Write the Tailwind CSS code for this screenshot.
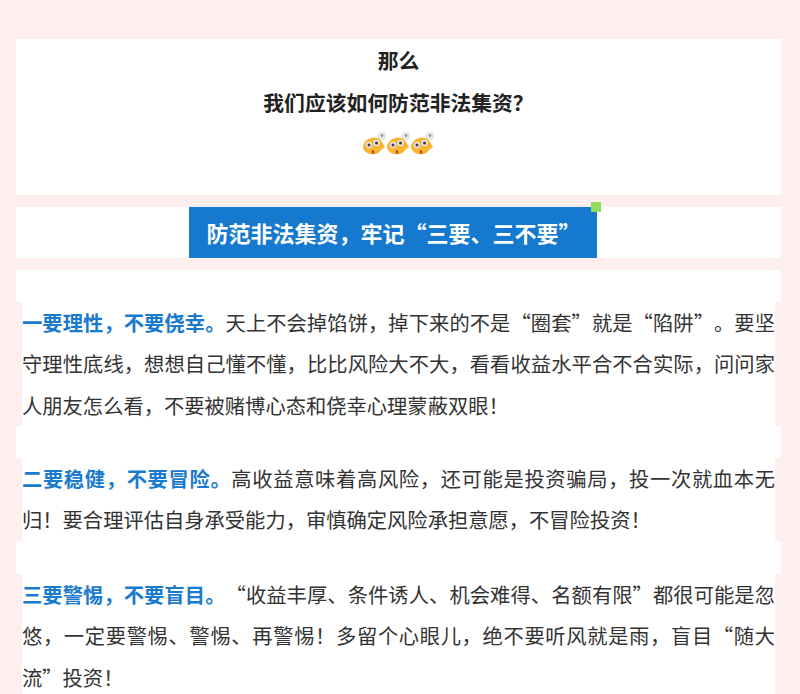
<!DOCTYPE html>
<html lang="zh-CN">
<head>
  <meta charset="UTF-8" />
  <title>防范非法集资</title>
  <script src="https://cdn.jsdelivr.net/npm/@tailwindcss/browser@4"></script>
</head>
<body class="bg-[#ffeeee] h-[694px] overflow-hidden font-['Noto_Sans_CJK_SC','Liberation_Sans',sans-serif] text-[#333] [text-spacing-trim:space-all]">
  <main class="pt-[39px] px-4 w-[797px]">

    <!-- 标题 -->
    <section class="bg-white h-[156px] flex flex-col items-center pt-[1px] text-[20.8px] font-bold text-[#222]">
      <p class="h-[41px] leading-[41px]">那么</p>
      <p class="h-[42px] leading-[42px]">我们应该如何防范非法集资？</p>
      <div class="flex mt-[8px] ml-[-1px]">
        <svg class="w-6 h-7" viewBox="0 0 24 28"><circle cx="20" cy="5" r="4" fill="#e4e4e4"/><circle cx="20" cy="4.500" r="1.200" fill="#888"/><path d="M1 17a10.500 10.500 0 0 1 19-6l3 5-3.500 2.500a10.500 10.500 0 0 1-18.500-1.500z" fill="#f9b430"/><circle cx="7" cy="14" r="3.200" fill="#e6e6e6"/><circle cx="14.500" cy="12" r="3.200" fill="#e6e6e6"/><circle cx="7" cy="14" r="1.500" fill="#3c3c4a"/><circle cx="14.500" cy="12" r="1.500" fill="#3c3c4a"/><ellipse cx="11" cy="21" rx="1.400" ry="1.900" fill="#b5521b"/></svg>
        <svg class="w-6 h-7" viewBox="0 0 24 28"><circle cx="20" cy="5" r="4" fill="#e4e4e4"/><circle cx="20" cy="4.500" r="1.200" fill="#888"/><path d="M1 17a10.500 10.500 0 0 1 19-6l3 5-3.500 2.500a10.500 10.500 0 0 1-18.500-1.500z" fill="#f9b430"/><circle cx="7" cy="14" r="3.200" fill="#e6e6e6"/><circle cx="14.500" cy="12" r="3.200" fill="#e6e6e6"/><circle cx="7" cy="14" r="1.500" fill="#3c3c4a"/><circle cx="14.500" cy="12" r="1.500" fill="#3c3c4a"/><ellipse cx="11" cy="21" rx="1.400" ry="1.900" fill="#b5521b"/></svg>
        <svg class="w-6 h-7" viewBox="0 0 24 28"><circle cx="20" cy="5" r="4" fill="#e4e4e4"/><circle cx="20" cy="4.500" r="1.200" fill="#888"/><path d="M1 17a10.500 10.500 0 0 1 19-6l3 5-3.500 2.500a10.500 10.500 0 0 1-18.500-1.500z" fill="#f9b430"/><circle cx="7" cy="14" r="3.200" fill="#e6e6e6"/><circle cx="14.500" cy="12" r="3.200" fill="#e6e6e6"/><circle cx="7" cy="14" r="1.500" fill="#3c3c4a"/><circle cx="14.500" cy="12" r="1.500" fill="#3c3c4a"/><ellipse cx="11" cy="21" rx="1.400" ry="1.900" fill="#b5521b"/></svg>
      </div>
    </section>

    <!-- 蓝色标题条 -->
    <section class="bg-white h-[51px] mt-3 flex justify-center">
      <div class="relative w-[408px] h-full bg-[#1479cf] flex items-center justify-center pl-[2px] ml-[-12px]">
        <h2 class="text-[22px] font-bold text-white">防范非法集资，牢记“三要、三不要”</h2>
        <span class="absolute right-[-4px] top-[-5px] w-[10px] h-[10px] bg-[#8fdc5f]"></span>
      </div>
    </section>

    <!-- 正文 -->
    <section class="mt-3">
      <div class="bg-white h-[32px]"></div>
      <p class="bg-white mx-[6px] text-[20.3px] leading-[41.3px] h-[124px] text-justify">
        <strong class="text-[#1a7ad0] font-bold">一要理性，不要侥幸。</strong>天上不会掉馅饼，掉下来的不是“圈套”就是“陷阱”。要坚守理性底线，想想自己懂不懂，比比风险大不大，看看收益水平合不合实际，问问家人朋友怎么看，不要被赌博心态和侥幸心理蒙蔽双眼！
      </p>
      <div class="bg-white h-[32px]"></div>
      <p class="bg-white mx-[6px] text-[20.3px] leading-[41.3px] h-[83px] text-justify">
        <strong class="text-[#1a7ad0] font-bold">二要稳健，不要冒险。</strong>高收益意味着高风险，还可能是投资骗局，投一次就血本无归！要合理评估自身承受能力，审慎确定风险承担意愿，不冒险投资！
      </p>
      <div class="bg-white h-[33px]"></div>
      <p class="bg-white mx-[6px] text-[20.3px] leading-[41.3px] h-[124px] text-justify">
        <strong class="text-[#1a7ad0] font-bold">三要警惕，不要盲目。</strong>“收益丰厚、条件诱人、机会难得、名额有限”都很可能是忽悠，一定要警惕、警惕、再警惕！多留个心眼儿，绝不要听风就是雨，盲目“随大流”投资！
      </p>
    </section>
  </main>
</body>
</html>
